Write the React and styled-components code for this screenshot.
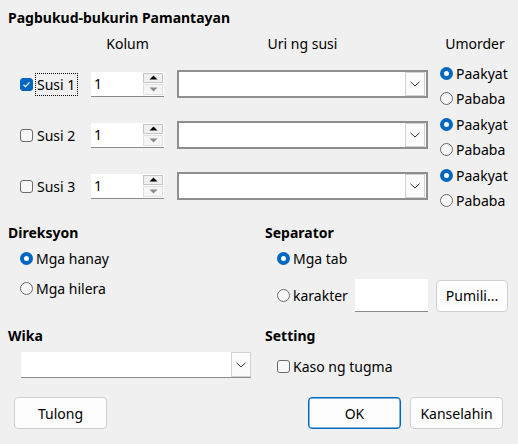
import styled, { createGlobalStyle } from "styled-components";

const GlobalStyle = createGlobalStyle`
  html, body {
    margin: 0;
    padding: 0;
    background: #f0f0f0;
  }
  body {
    font-family: "Noto Sans", "Liberation Sans", sans-serif;
    font-size: 14px;
    color: #000;
  }
`;

const keys = [
  { name: "Susi 1", checked: true, focused: true },
  { name: "Susi 2", checked: false },
  { name: "Susi 3", checked: false },
];

function App() {
  return (
    <Dialog>
      <GlobalStyle />
      <Title>Pagbukud-bukurin Pamantayan</Title>

      <KeysTable>
        <HeaderRow>
          <span />
          <ColHead>Kolum</ColHead>
          <ColHead>Uri ng susi</ColHead>
          <ColHead>Umorder</ColHead>
        </HeaderRow>
        {keys.map((k) => (
          <KeyRow key={k.name}>
            <Cell>
              <Check checked={k.checked} />
              <KeyLabel $focused={k.focused}>{k.name}</KeyLabel>
            </Cell>
            <Cell>
              <Spin />
            </Cell>
            <Cell>
              <Combo $width={251} $boxed />
            </Cell>
            <RadioStack>
              <Radio checked>Paakyat</Radio>
              <Radio>Pababa</Radio>
            </RadioStack>
          </KeyRow>
        ))}
      </KeysTable>

      <Options>
        <Group>
          <GroupTitle>Direksyon</GroupTitle>
          <GroupBody $gap={6}>
            <Radio checked>Mga hanay</Radio>
            <Radio>Mga hilera</Radio>
          </GroupBody>
        </Group>
        <Group>
          <GroupTitle>Separator</GroupTitle>
          <GroupBody $gap={9}>
            <Radio checked>Mga tab</Radio>
            <CharRow>
              <Radio width={78}>karakter</Radio>
              <CharInput />
              <SmallButton>Pumili...</SmallButton>
            </CharRow>
          </GroupBody>
        </Group>
        <Group>
          <GroupTitle>Wika</GroupTitle>
          <WikaWrap>
            <Combo $width={230} />
          </WikaWrap>
        </Group>
        <Group>
          <GroupTitle>Setting</GroupTitle>
          <SettingBody>
            <CheckItem>
              <Check />
              <span>Kaso ng tugma</span>
            </CheckItem>
          </SettingBody>
        </Group>
      </Options>

      <Footer>
        <Button>Tulong</Button>
        <FooterRight>
          <Button $primary>OK</Button>
          <Button>Kanselahin</Button>
        </FooterRight>
      </Footer>
    </Dialog>
  );
}

function Check({ checked }) {
  return (
    <CheckBox $checked={checked}>
      {checked && (
        <svg width="9" height="9" viewBox="0 0 9 9">
          <path d="M1.5 4.8 L3.5 6.6 L7.5 2.4" fill="none" stroke="#fff" strokeWidth="1.2" />
        </svg>
      )}
    </CheckBox>
  );
}

function Radio({ checked, children, width }) {
  return (
    <RadioItem style={width ? { width } : undefined}>
      <RadioDot $checked={checked} />
      <span>{children}</span>
    </RadioItem>
  );
}

function Spin() {
  return (
    <SpinBox>
      <SpinValue>1</SpinValue>
      <SpinButtons>
        <SpinBtn>
          <svg width="9" height="5" viewBox="0 0 9 5">
            <path d="M0.5 4.5 L4.5 0.5 L8.5 4.5 Z" fill="#000" />
          </svg>
        </SpinBtn>
        <SpinBtn $disabled>
          <svg width="9" height="5" viewBox="0 0 9 5">
            <path d="M0.5 0.5 L4.5 4.5 L8.5 0.5 Z" fill="#8a8a8a" />
          </svg>
        </SpinBtn>
      </SpinButtons>
    </SpinBox>
  );
}

function Combo({ $width, $boxed }) {
  return (
    <ComboBox $width={$width} $boxed={$boxed}>
      <ComboField />
      <DropBtn>
        <svg width="10" height="6" viewBox="0 0 10 6">
          <path d="M0.5 0.8 L5 5 L9.5 0.8" fill="none" stroke="#333" strokeWidth="1" />
        </svg>
      </DropBtn>
    </ComboBox>
  );
}

export default App;

const Dialog = styled.div`
  width: 518px;
  height: 444px;
  box-sizing: border-box;
  padding-top: 8px;
  display: flex;
  flex-direction: column;
  overflow: hidden;
`;

const Title = styled.div`
  margin-left: 8px;
  font-weight: 700;
  line-height: 20px;
`;

const KeysTable = styled.div`
  margin-top: 6px;
  padding-left: 20px;
`;

const columns = "71px 86px 263px 78px";

const HeaderRow = styled.div`
  display: grid;
  grid-template-columns: ${columns};
  height: 26px;
  line-height: 20px;
`;

const ColHead = styled.div`
  text-align: center;
  &:nth-child(2) {
    width: 73px;
  }
  &:nth-child(3) {
    width: 251px;
  }
  &:nth-child(4) {
    width: 70px;
  }
`;

const KeyRow = styled.div`
  display: grid;
  grid-template-columns: ${columns};
  height: 51px;
  align-items: center;
`;

const Cell = styled.div`
  display: flex;
  align-items: center;
  margin-bottom: 3px;
`;

const CheckBox = styled.span`
  width: 13px;
  height: 13px;
  box-sizing: border-box;
  border-radius: 3px;
  display: inline-flex;
  align-items: center;
  justify-content: center;
  flex: none;
  background: ${(p) => (p.$checked ? "#0067c0" : "#f7f7f7")};
  border: 1px solid ${(p) => (p.$checked ? "#0067c0" : "#6b6b6b")};
`;

const KeyLabel = styled.span`
  margin-left: 3px;
  padding: 0 2px 0 1px;
  line-height: 21px;
  outline: ${(p) => (p.$focused ? "1px dotted #000" : "none")};
`;

const SpinBox = styled.div`
  width: 73px;
  height: 25px;
  box-sizing: border-box;
  background: #fff;
  border-bottom: 1px solid #8a8a8a;
  display: flex;
  align-items: stretch;
`;

const SpinValue = styled.div`
  flex: 1;
  padding-left: 3px;
  line-height: 24px;
`;

const SpinButtons = styled.div`
  width: 20px;
  display: flex;
  flex-direction: column;
  gap: 1px;
  padding: 1px 1px 1px 0;
`;

const SpinBtn = styled.div`
  flex: 1;
  display: flex;
  align-items: center;
  justify-content: center;
  background: ${(p) => (p.$disabled ? "#f5f5f5" : "#f0f0f0")};
  border: 1px solid ${(p) => (p.$disabled ? "#e0e0e0" : "#c4c4c4")};
`;

const ComboBox = styled.div`
  width: ${(p) => p.$width}px;
  height: ${(p) => (p.$boxed ? 28 : 26)}px;
  box-sizing: border-box;
  background: #fff;
  display: flex;
  ${(p) =>
    p.$boxed
      ? "border: 2px solid #8e8e8e; padding: 0 1px 0 0;"
      : "border-bottom: 1px solid #8a8a8a; padding: 0;"}
`;

const ComboField = styled.div`
  flex: 1;
`;

const DropBtn = styled.div`
  width: 20px;
  box-sizing: border-box;
  border: 1px solid #d2d2d2;
  background: #fbfbfb;
  display: flex;
  align-items: center;
  justify-content: center;
`;

const RadioStack = styled.div`
  display: flex;
  flex-direction: column;
`;

const RadioItem = styled.label`
  display: flex;
  align-items: center;
  gap: 3px;
  height: 25px;
  white-space: nowrap;
`;

const RadioDot = styled.span`
  width: 13px;
  height: 13px;
  box-sizing: border-box;
  border-radius: 50%;
  flex: none;
  ${(p) =>
    p.$checked
      ? "background: #fff; border: 4px solid #0067c0;"
      : "background: #f7f7f7; border: 1px solid #6b6b6b;"}
`;

const Options = styled.div`
  margin-top: 9px;
  display: grid;
  grid-template-columns: 257px 1fr;
  row-gap: 13px;
  padding-left: 8px;
`;

const Group = styled.div`
  display: flex;
  flex-direction: column;
`;

const GroupTitle = styled.div`
  font-weight: 700;
  line-height: 22px;
`;

const GroupBody = styled.div`
  display: flex;
  flex-direction: column;
  gap: ${(p) => p.$gap}px;
  margin-top: 2px;
  padding-left: 12px;
  & > ${RadioItem} {
    height: 24px;
  }
`;

const CharRow = styled.div`
  display: flex;
  align-items: center;
  height: 33px;
`;

const CharInput = styled.div`
  width: 73px;
  height: 33px;
  box-sizing: border-box;
  background: #fff;
  border-bottom: 1px solid #8a8a8a;
`;

const SmallButton = styled.div`
  margin-left: 8px;
  width: 72px;
  height: 32px;
  box-sizing: border-box;
  border: 1px solid #d0d0d0;
  border-radius: 4px;
  background: #fdfdfd;
  display: flex;
  align-items: center;
  justify-content: center;
`;

const WikaWrap = styled.div`
  margin-top: 5px;
  padding-left: 13px;
`;

const SettingBody = styled.div`
  margin-top: 7px;
  padding-left: 12px;
`;

const CheckItem = styled.label`
  display: flex;
  align-items: center;
  gap: 3px;
  height: 24px;
`;

const Footer = styled.div`
  margin-top: auto;
  padding: 0 15px 15px 14px;
  display: flex;
  justify-content: space-between;
`;

const FooterRight = styled.div`
  display: flex;
  gap: 9px;
`;

const Button = styled.div`
  width: 93px;
  height: 32px;
  box-sizing: border-box;
  border-radius: 4px;
  background: #fdfdfd;
  border: 1px solid ${(p) => (p.$primary ? "#0067c0" : "#d0d0d0")};
  box-shadow: ${(p) => (p.$primary ? "inset 0 0 0 0.5px #0067c0" : "none")};
  display: flex;
  align-items: center;
  justify-content: center;
`;
